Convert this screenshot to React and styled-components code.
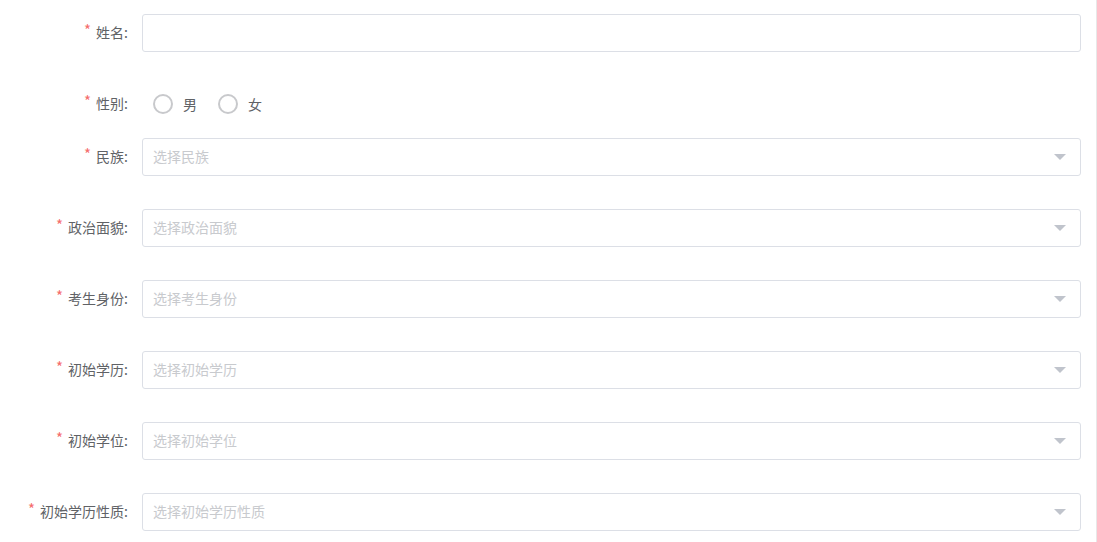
import React from "react";
import styled, { createGlobalStyle } from "styled-components";

const GlobalStyle = createGlobalStyle`
  html, body { margin: 0; padding: 0; background: #fff; }
  body { font-family: "Noto Sans CJK SC", "Noto Sans", sans-serif; }
  * { box-sizing: border-box; }
`;

const Page = styled.div`
  width: 1097px;
  height: 542px;
  border-right: 1px solid #e8e8e8;
  padding: 14px 15px 0 0;
  overflow: hidden;
`;

const Item = styled.div`
  display: flex;
  align-items: center;
  height: 38px;
  margin-bottom: ${(p) => p.$mb}px;
`;

const Label = styled.label`
  width: 142px;
  flex: none;
  padding-right: 14px;
  padding-bottom: 2px;
  text-align: right;
  font-size: 14px;
  line-height: 36px;
  color: #606266;
  white-space: nowrap;
  &::before {
    content: "*";
    color: #f56c6c;
    margin-right: 5px;
    font-size: 15px;
    position: relative;
    top: -2px;
  }
`;

const Field = styled.div`
  flex: 1;
  height: 38px;
  border: 1px solid #dcdfe6;
  border-radius: 3px;
  background: #fff;
  display: flex;
  align-items: center;
  padding: 0 10px 2px;
  font-size: 14px;
  color: #c0c4cc;
`;

const Placeholder = styled.span`
  flex: 1;
  color: #c8cace;
`;

const Arrow = styled.span`
  width: 0;
  height: 0;
  border-left: 6px solid transparent;
  border-right: 6px solid transparent;
  border-top: 6px solid #c0c4cc;
  margin-right: 4px;
  margin-top: 2px;
`;

const RadioGroup = styled.div`
  display: flex;
  align-items: center;
  padding-left: 11px;
  gap: 21px;
`;

const RadioOption = styled.label`
  display: flex;
  align-items: center;
  gap: 10px;
  font-size: 14px;
  color: #606266;
`;

const Circle = styled.span`
  width: 20px;
  height: 20px;
  border-radius: 50%;
  border: 2px solid #c8c9cc;
  background: #fff;
`;

const selects = [
  ["民族", "选择民族"],
  ["政治面貌", "选择政治面貌"],
  ["考生身份", "选择考生身份"],
  ["初始学历", "选择初始学历"],
  ["初始学位", "选择初始学位"],
  ["初始学历性质", "选择初始学历性质"],
];

export default function App() {
  return (
    <>
      <GlobalStyle />
      <Page>
        <Item $mb={33}>
          <Label>姓名:</Label>
          <Field />
        </Item>
        <Item $mb={15}>
          <Label>性别:</Label>
          <RadioGroup>
            <RadioOption>
              <Circle />
              男
            </RadioOption>
            <RadioOption>
              <Circle />
              女
            </RadioOption>
          </RadioGroup>
        </Item>
        {selects.map(([label, ph]) => (
          <Item key={label} $mb={33}>
            <Label>{label}:</Label>
            <Field>
              <Placeholder>{ph}</Placeholder>
              <Arrow />
            </Field>
          </Item>
        ))}
      </Page>
    </>
  );
}
